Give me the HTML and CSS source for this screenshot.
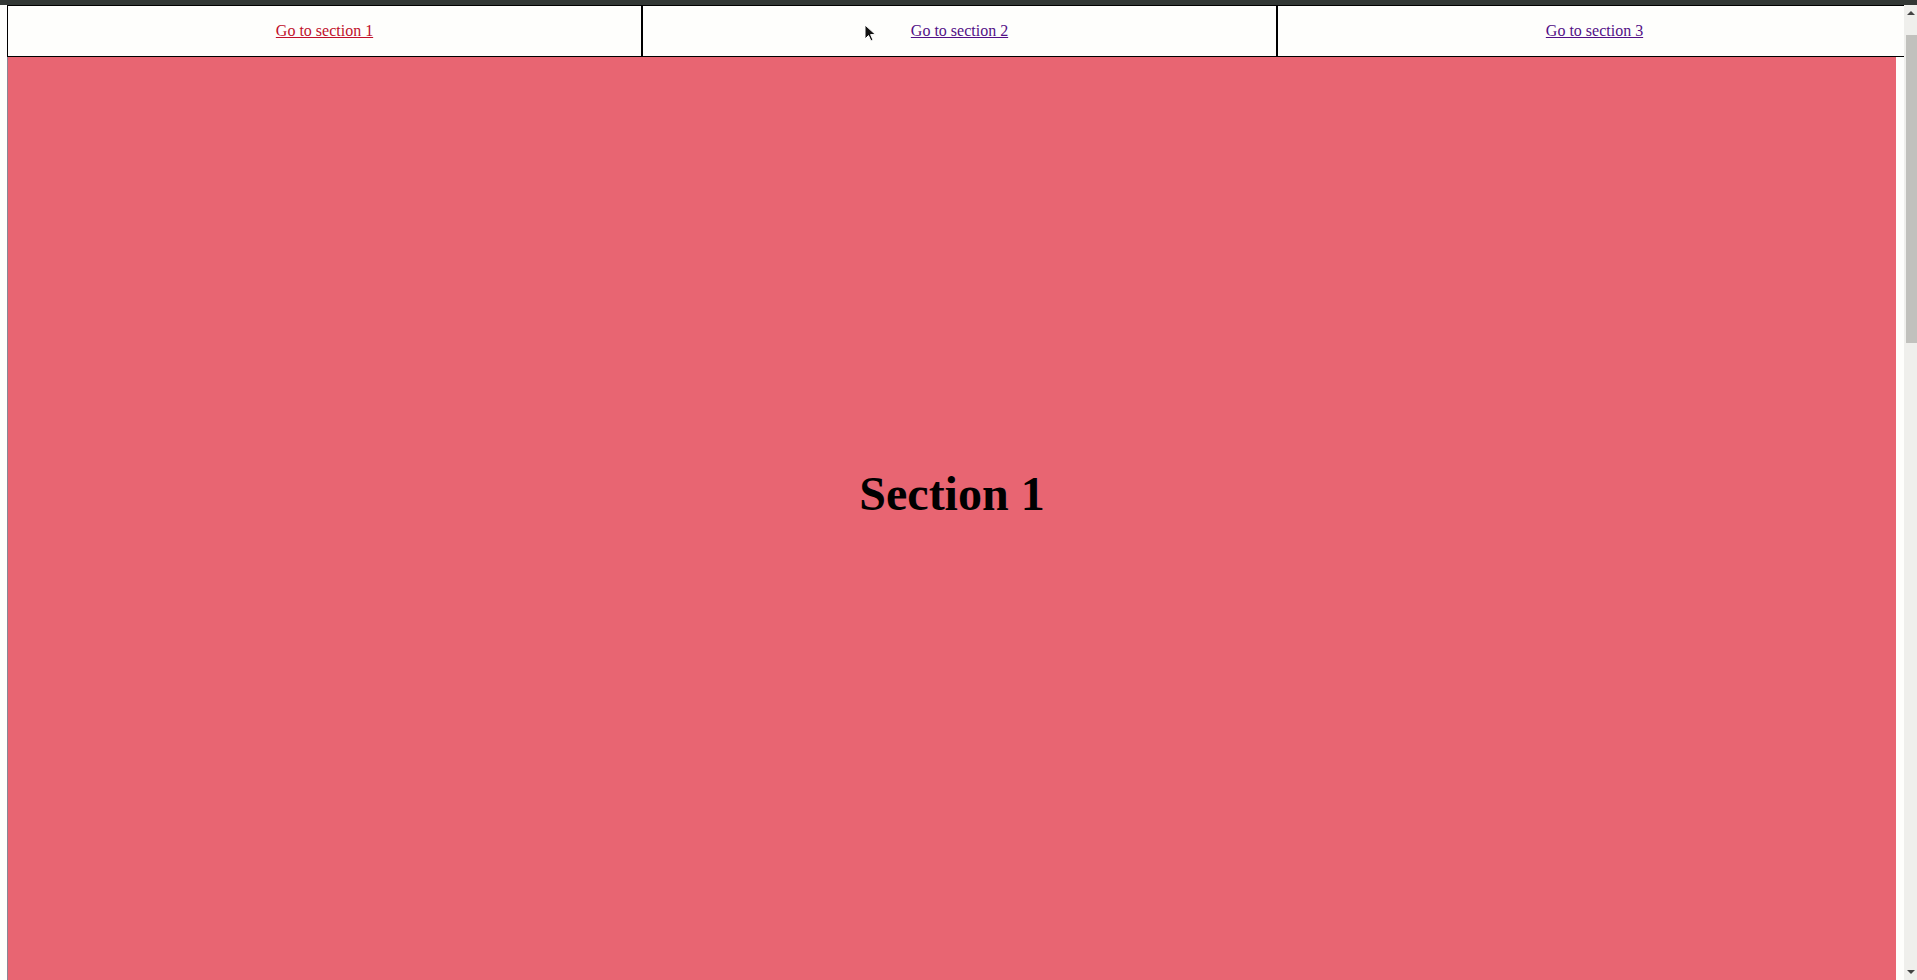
FILE: index.html
```html
<!DOCTYPE html>
<html>
<head>
<meta charset="utf-8">
<title>Sections</title>
<link rel="stylesheet" href="styles.css">
</head>
<body>
<div class="topbar"></div>
<div class="frame">
  <div class="gutter"></div>
  <div class="main">
    <nav class="nav">
      <div class="cell"><a class="link active" href="#s1">Go to section 1</a></div>
      <div class="cell"><a class="link" href="#s2">Go to section 2</a></div>
      <div class="cell"><a class="link" href="#s3">Go to section 3</a></div>
    </nav>
    <div class="content">
      <section class="section" id="s1">
        <h1 class="title">Section 1</h1>
      </section>
      <div class="rgap"></div>
    </div>
    <svg class="cursor" width="14" height="20" viewBox="0 0 14 20">
      <path d="M1 1 L1 15 L4.5 11.5 L7 17 L9 16 L6.6 10.6 L11.5 10.6 Z" fill="#111" stroke="#fff" stroke-width="1"/>
    </svg>
  </div>
  <div class="scrollbar">
    <div class="arrow up"></div>
    <div class="track"><div class="thumb"></div></div>
    <div class="arrow down"></div>
  </div>
</div>
</body>
</html>
```

FILE: styles.css
```css
html, body {
  margin: 0;
  padding: 0;
  height: 980px;
  overflow: hidden;
  background: #fefefc;
}
body {
  display: flex;
  flex-direction: column;
  font-family: "Liberation Serif", "Times New Roman", serif;
}
.topbar {
  height: 5px;
  background: #333835;
  flex: none;
}
.frame {
  flex: 1;
  display: flex;
  min-height: 0;
}
.gutter {
  width: 7px;
  flex: none;
}
.main {
  width: 1897px;
  flex: none;
  display: flex;
  flex-direction: column;
  overflow: hidden;
  position: relative;
}
.nav {
  display: flex;
  width: 1905px;
  flex: none;
}
.cell {
  width: 635px;
  height: 52px;
  box-sizing: border-box;
  border: 1px solid #000;
  display: flex;
  align-items: center;
  justify-content: center;
  background: #fefefc;
}
.link {
  font-size: 16px;
  color: #520f86;
  text-decoration: underline;
  line-height: 18px;
}
.link.active {
  color: #c0102a;
}
.content {
  flex: 1;
  display: flex;
  min-height: 0;
}
.section {
  width: 1889px;
  box-sizing: border-box;
  background: #e86572;
  border-left: 1px solid #8c8592;
  display: flex;
  justify-content: center;
  align-items: flex-start;
  padding-top: 409px;
}
.rgap {
  flex: 1;
}
.title {
  margin: 0;
  font-size: 48px;
  line-height: 55px;
  font-weight: bold;
  color: #000;
}
.cursor {
  position: absolute;
  left: 857px;
  top: 19px;
}
.scrollbar {
  width: 13px;
  flex: none;
  background: #efefec;
  display: flex;
  flex-direction: column;
}
.arrow {
  height: 16px;
  flex: none;
  display: flex;
  align-items: center;
  justify-content: center;
}
.arrow.up::before {
  content: "";
  border-left: 4px solid transparent;
  border-right: 4px solid transparent;
  border-bottom: 4px solid #444;
}
.arrow.down::before {
  content: "";
  border-left: 4px solid transparent;
  border-right: 4px solid transparent;
  border-top: 4px solid #444;
}
.track {
  flex: 1;
  padding-top: 14px;
}
.thumb {
  margin-left: 2px;
  width: 11px;
  height: 308px;
  background: #c1c1bd;
}
```
